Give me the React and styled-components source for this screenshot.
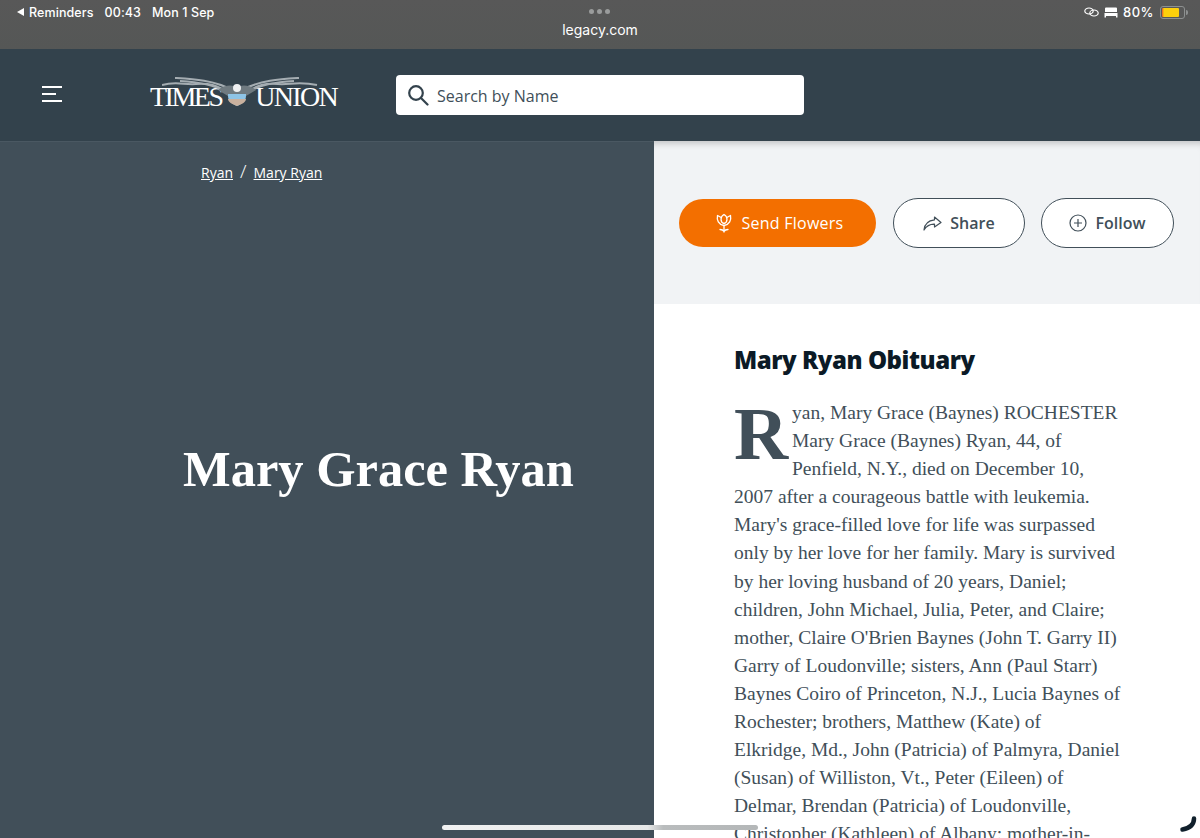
import React from 'react';
import styled, { createGlobalStyle } from 'styled-components';

const lines = [
  'yan, Mary Grace (Baynes) ROCHESTER',
  'Mary Grace (Baynes) Ryan, 44, of',
  'Penfield, N.Y., died on December 10,',
  '2007 after a courageous battle with leukemia.',
  "Mary's grace-filled love for life was surpassed",
  'only by her love for her family. Mary is survived',
  'by her loving husband of 20 years, Daniel;',
  'children, John Michael, Julia, Peter, and Claire;',
  "mother, Claire O'Brien Baynes (John T. Garry II)",
  'Garry of Loudonville; sisters, Ann (Paul Starr)',
  'Baynes Coiro of Princeton, N.J., Lucia Baynes of',
  'Rochester; brothers, Matthew (Kate) of',
  'Elkridge, Md., John (Patricia) of Palmyra, Daniel',
  '(Susan) of Williston, Vt., Peter (Eileen) of',
  'Delmar, Brendan (Patricia) of Loudonville,',
  'Christopher (Kathleen) of Albany; mother-in-',
];

function App() {
  return (
    <Screen>
      <GlobalStyle />
      <Chrome>
        <StatusLeft>
          <BackArrow />
          <span>Reminders</span>
          <span>00:43</span>
          <span>Mon 1 Sep</span>
        </StatusLeft>
        <Address>
          <Dots><i /><i /><i /></Dots>
          <span>legacy.com</span>
        </Address>
        <StatusRight>
          <svg width="15" height="10" viewBox="0 0 15 10" fill="none" stroke="#fff" strokeWidth="1.2">
            <ellipse cx="5" cy="4" rx="4.2" ry="3" />
            <ellipse cx="10" cy="6" rx="4.2" ry="3" />
          </svg>
          <svg width="14" height="11" viewBox="0 0 14 11" fill="#fff">
            <path d="M2 0.5h10a1 1 0 0 1 1 1V5H1V1.500a1 1 0 0 1 1-1z" />
            <path d="M0.5 6h13v4.500h-1.500V9H2v1.500H0.500z" />
          </svg>
          <span>80%</span>
          <Battery><BatteryFill /></Battery>
        </StatusRight>
      </Chrome>

      <Header>
        <MenuButton>
          <svg width="20" height="16" viewBox="0 0 20 16" stroke="#fff" strokeWidth="2">
            <path d="M0 1h20M0 8h14M0 15h20" />
          </svg>
        </MenuButton>
        <Logo>
          <LogoWord $spacing={-2.5}>TIMES</LogoWord>
          <LogoWord $spacing={-1.7}>UNION</LogoWord>
          <Eagle width="165" height="34" viewBox="0 0 165 34">
            <g fill="none" stroke="#a5adb2" strokeWidth="2">
              <path d="M0 9C14 5 22 9 34 8 46 7 54 8 70 19" />
              <path d="M13 2C30 3 52 4 70 14" />
              <path d="M18 5C34 6 52 8 68 18" />
              <path d="M155 9C136 5 128 9 116 8 104 7 96 8 80 19" />
              <path d="M137 2C120 3 98 4 80 14" />
              <path d="M132 5C116 6 98 8 82 18" />
            </g>
            <path d="M56 14C64 8 72 9 75 12 78 9 86 8 94 14L84 20H66z" fill="#6f7a80" />
            <circle cx="75" cy="12" r="4" fill="#eef0f1" />
            <path d="M66 18h18v2c0 5-4 8-9 10-5-2-9-5-9-10z" fill="#8ec4e6" />
            <path d="M66 23h18c0 3-4 5-9 7-5-2-9-4-9-7z" fill="#c9b19e" />
          </Eagle>
        </Logo>
        <SearchBox>
          <svg width="22" height="22" viewBox="0 0 22 22" fill="none" stroke="#33424c" strokeWidth="2.200">
            <circle cx="9" cy="9" r="6.800" />
            <path d="M14 14l6.500 6.500" strokeLinecap="round" />
          </svg>
          <span>Search by Name</span>
        </SearchBox>
      </Header>

      <Main>
        <Hero>
          <Crumbs>
            <a>Ryan</a>
            <span>/</span>
            <a>Mary Ryan</a>
          </Crumbs>
          <Name>Mary Grace Ryan</Name>
        </Hero>
        <Side>
          <Actions>
            <FlowerButton>
              <svg width="18" height="20" viewBox="0 0 18 20" fill="none" stroke="#fff" strokeWidth="1.300" strokeLinejoin="round" strokeLinecap="round">
                <path d="M9 1.500c1.800 1 3 2.800 3 4.800 0 2-1.200 3.700-3 4.200-1.800-.5-3-2.200-3-4.200 0-2 1.200-3.800 3-4.800z" />
                <path d="M6.200 4.500L2.500 2.500C1.500 7 3.500 11.500 9 12.500c5.500-1 7.500-5.500 6.500-10L11.800 4.500" />
                <path d="M9 12.500V19M5 16.500c1.800 0 3.200.6 4 2 .8-1.400 2.200-2 4-2" />
              </svg>
              Send Flowers
            </FlowerButton>
            <OutlineButton $width={132}>
              <svg width="19" height="15" viewBox="0 0 19 15" fill="none" stroke="#414f59" strokeWidth="1.200" strokeLinejoin="round">
                <path d="M11.500 1L18 6.500 11.500 11V8.200C6.500 8 3.500 10 1 14c.5-5.500 4-9.500 10.500-10.200z" />
              </svg>
              Share
            </OutlineButton>
            <OutlineButton $width={133}>
              <svg width="18" height="18" viewBox="0 0 18 18" fill="none" stroke="#414f59" strokeWidth="1.200">
                <circle cx="9" cy="9" r="8" />
                <path d="M9 5v8M5 9h8" />
              </svg>
              Follow
            </OutlineButton>
          </Actions>
          <Article>
            <Heading>Mary Ryan Obituary</Heading>
            <Body>
              <DropCap>R</DropCap>
              {lines.map((line) => (
                <React.Fragment key={line}>
                  {line}
                  <br />
                </React.Fragment>
              ))}
            </Body>
          </Article>
        </Side>
      </Main>

      <HomeBar />
      <Corner width="20" height="18" viewBox="0 0 20 18" fill="none" stroke="#10202c" strokeWidth="4.500" strokeLinecap="round">
        <path d="M15 2.500c0 6-3.500 9.500-11.500 11" />
      </Corner>
    </Screen>
  );
}

const GlobalStyle = createGlobalStyle`
  html, body {
    margin: 0;
    padding: 0;
    background: #fff;
  }
`;

const Screen = styled.div`
  position: relative;
  width: 1200px;
  height: 838px;
  overflow: hidden;
  display: flex;
  flex-direction: column;
  font-family: "Open Sans", sans-serif;
`;

const Chrome = styled.div`
  height: 49px;
  flex: none;
  display: grid;
  grid-template-columns: 1fr auto 1fr;
  background: linear-gradient(#585858, #555756);
  color: #fff;
  font-family: Inter, sans-serif;
  font-size: 12.500px;
  font-weight: 500;
`;

const StatusLeft = styled.div`
  display: flex;
  align-items: center;
  align-self: start;
  height: 24px;
  padding-left: 17px;
  gap: 11px;
  letter-spacing: 0.100px;

  span:first-of-type {
    margin-left: -6px;
  }
`;

const BackArrow = styled.i`
  width: 0;
  height: 0;
  border-style: solid;
  border-width: 4px 7px 4px 0;
  border-color: transparent #fff transparent transparent;
`;

const Address = styled.div`
  display: flex;
  flex-direction: column;
  align-items: center;
  padding-top: 9px;
  gap: 7px;
  font-size: 14px;
  font-weight: 400;
`;

const Dots = styled.div`
  display: flex;
  gap: 3px;

  i {
    width: 5px;
    height: 5px;
    border-radius: 50%;
    background: #9a9c9c;
  }
`;

const StatusRight = styled.div`
  display: flex;
  align-items: center;
  justify-content: flex-end;
  align-self: start;
  height: 24px;
  padding-right: 15px;
  gap: 5px;
  font-size: 13px;
  letter-spacing: 0.500px;
`;

const Battery = styled.div`
  position: relative;
  width: 21px;
  height: 9px;
  margin-left: 1px;
  padding: 1px;
  border: 1px solid #8d9090;
  border-radius: 3px;

  &::after {
    content: '';
    position: absolute;
    right: -4px;
    top: 3px;
    width: 2px;
    height: 5px;
    border-radius: 0 2px 2px 0;
    background: #8d9090;
  }
`;

const BatteryFill = styled.div`
  width: 80%;
  height: 100%;
  border-radius: 1px;
  background: linear-gradient(90deg, #e8562a 0, #fdd00c 12%);
`;

const Header = styled.header`
  height: 92px;
  flex: none;
  display: flex;
  align-items: center;
  background: #33424c;
`;

const MenuButton = styled.div`
  display: flex;
  margin-left: 42px;
  margin-top: -3px;
`;

const Logo = styled.div`
  position: relative;
  width: 187px;
  height: 24px;
  margin: 3px 0 0 88px;
  display: flex;
  justify-content: space-between;
  align-items: flex-end;
`;

const Eagle = styled.svg`
  position: absolute;
  left: 12px;
  top: -9px;
`;

const LogoWord = styled.span`
  color: #fff;
  font-family: "Liberation Serif", serif;
  font-size: 28px;
  line-height: 24px;
  letter-spacing: ${(props) => props.$spacing}px;
`;

const SearchBox = styled.div`
  width: 408px;
  height: 40px;
  margin-left: 59px;
  padding-left: 11px;
  box-sizing: border-box;
  display: flex;
  align-items: center;
  gap: 8px;
  background: #fff;
  border-radius: 4px;
  color: #414f59;
  font-size: 16px;

  span {
    margin-top: 2px;
  }
`;

const Main = styled.div`
  flex: 1;
  display: flex;
  min-height: 0;
`;

const Hero = styled.section`
  width: 654px;
  flex: none;
  background: #414f59;
  border-top: 1px solid #4a5862;
  box-sizing: border-box;
  color: #fff;
`;

const Crumbs = styled.nav`
  display: flex;
  align-items: baseline;
  gap: 7px;
  padding: 19px 0 0 201px;
  font-size: 14px;
  line-height: 20px;

  a {
    text-decoration: underline;
  }

  span {
    font-size: 19px;
    font-weight: 300;
  }
`;

const Name = styled.h1`
  margin: 255px 0 0 183px;
  font-family: "Liberation Serif", serif;
  font-size: 50.500px;
  font-weight: 700;
  line-height: 62px;
  white-space: nowrap;
`;

const Side = styled.section`
  flex: 1;
  display: flex;
  flex-direction: column;
  min-width: 0;
`;

const Actions = styled.div`
  height: 163px;
  flex: none;
  box-sizing: border-box;
  display: flex;
  align-items: flex-start;
  gap: 16px;
  padding: 57px 0 0 25px;
  background: #f1f3f5;
  box-shadow: inset 0 8px 7px -6px rgba(0, 0, 0, 0.220);
`;

const FlowerButton = styled.div`
  width: 197px;
  height: 48px;
  margin-top: 1px;
  margin-right: 1px;
  padding-left: 3px;
  box-sizing: border-box;
  display: flex;
  align-items: center;
  justify-content: center;
  gap: 9px;
  background: #f36f00;
  border-radius: 24px;
  color: #fff;
  font-size: 16px;
  font-weight: 500;
  letter-spacing: 0.250px;
`;

const OutlineButton = styled.div`
  width: ${(props) => props.$width}px;
  height: 50px;
  box-sizing: border-box;
  display: flex;
  align-items: center;
  justify-content: center;
  gap: 8px;
  background: #fff;
  border: 1px solid #414f59;
  border-radius: 25px;
  color: #414f59;
  font-size: 16px;
  font-weight: 600;
`;

const Article = styled.article`
  flex: 1;
  padding: 38px 0 0 80px;
  background: #fff;
`;

const Heading = styled.h2`
  margin: 0;
  color: #0b1a26;
  font-size: 24px;
  font-weight: 800;
  line-height: 36px;
  letter-spacing: -0.450px;
`;

const Body = styled.div`
  margin-top: 21px;
  color: #414f59;
  font-family: "Liberation Serif", serif;
  font-size: 19.500px;
  line-height: 28.100px;
  white-space: nowrap;
`;

const DropCap = styled.span`
  float: left;
  width: 58px;
  height: 84px;
  color: #414f59;
  font-size: 75px;
  font-weight: 700;
  line-height: 70px;
`;

const HomeBar = styled.div`
  position: absolute;
  left: 442px;
  top: 825px;
  width: 316px;
  height: 5px;
  border-radius: 3px;
  background: linear-gradient(90deg, #f0f1f1 0%, #e6e8e8 65%, #b9bcbd 70%, #b4b7b8 100%);
`;

const Corner = styled.svg`
  position: absolute;
  left: 1179px;
  top: 816px;
`;

export default App;
